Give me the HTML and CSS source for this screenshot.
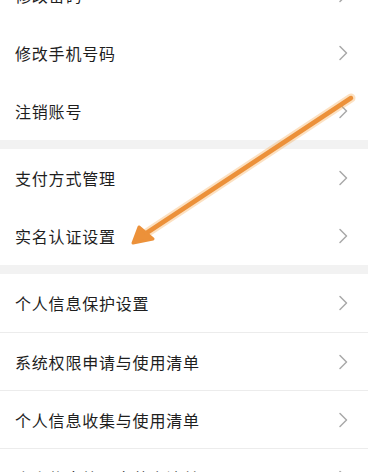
FILE: index.html
```html
<!DOCTYPE html>
<html lang="zh-CN">
<head>
  <meta charset="UTF-8">
  <meta name="viewport" content="width=device-width, initial-scale=1.0">
  <link rel="stylesheet" href="styles.css">
</head>
<body>
  <div class="page">

    <div class="group group-first">
      <div class="row"><span class="row-text">修改密码</span><svg class="chevron" viewBox="0 0 10 16"><path d="M2 1.5 L8.5 8 L2 14.5"/></svg></div>
      <div class="row"><span class="row-text">修改手机号码</span><svg class="chevron" viewBox="0 0 10 16"><path d="M2 1.5 L8.5 8 L2 14.5"/></svg></div>
      <div class="row"><span class="row-text">注销账号</span><svg class="chevron" viewBox="0 0 10 16"><path d="M2 1.5 L8.5 8 L2 14.5"/></svg></div>
    </div>

    <div class="group">
      <div class="row"><span class="row-text">支付方式管理</span><svg class="chevron" viewBox="0 0 10 16"><path d="M2 1.5 L8.5 8 L2 14.5"/></svg></div>
      <div class="row"><span class="row-text">实名认证设置</span><svg class="chevron" viewBox="0 0 10 16"><path d="M2 1.5 L8.5 8 L2 14.5"/></svg></div>
    </div>

    <div class="group group-lined">
      <div class="row"><span class="row-text">个人信息保护设置</span><svg class="chevron" viewBox="0 0 10 16"><path d="M2 1.5 L8.5 8 L2 14.5"/></svg></div>
      <div class="row"><span class="row-text">系统权限申请与使用清单</span><svg class="chevron" viewBox="0 0 10 16"><path d="M2 1.5 L8.5 8 L2 14.5"/></svg></div>
      <div class="row"><span class="row-text">个人信息收集与使用清单</span><svg class="chevron" viewBox="0 0 10 16"><path d="M2 1.5 L8.5 8 L2 14.5"/></svg></div>
      <div class="row"><span class="row-text">个人信息第三方共享清单</span><svg class="chevron" viewBox="0 0 10 16"><path d="M2 1.5 L8.5 8 L2 14.5"/></svg></div>
    </div>

    <!-- 手描きの矢印 -->
    <svg class="pointer-arrow" viewBox="0 0 368 472">
      <g class="arrow-glow">
        <path d="M351 98 L142 236"/>
      </g>
      <path class="arrow-line" d="M351 98 L142 236"/>
      <path class="arrow-head" d="M133 243 L139 227 L153 239 Z"/>
    </svg>

  </div>
</body>
</html>
```

FILE: styles.css
```css
body {
  margin: 0;
  background-color: #f2f2f2;
  font-family: "Noto Sans CJK SC", "Noto Sans", sans-serif;
  overflow: hidden;
}

.page {
  position: relative;
  width: 368px;
  height: 472px;
  overflow: hidden;
}

.group {
  background-color: #ffffff;
  margin-bottom: 9px;
}

.group-first {
  margin-top: -34px;
}

.row {
  height: 58px;
  display: flex;
  align-items: center;
  justify-content: space-between;
  padding: 0 20px 0 15px;
  box-sizing: border-box;
}

.group-lined .row + .row {
  border-top: 1px solid #ececec;
}

.row-text {
  font-size: 16px;
  letter-spacing: 0.8px;
  color: #1e1e1e;
}

.chevron {
  width: 10px;
  height: 16px;
  fill: none;
  stroke: #a9a9a9;
  stroke-width: 1.5;
  stroke-linecap: round;
  stroke-linejoin: round;
}

.pointer-arrow {
  position: absolute;
  top: 0;
  left: 0;
  width: 368px;
  height: 472px;
  pointer-events: none;
}

.arrow-glow path {
  stroke: rgba(245, 170, 80, 0.35);
  stroke-width: 9;
  stroke-linecap: round;
  fill: none;
}

.arrow-line {
  stroke: #ec913a;
  stroke-width: 4.5;
  stroke-linecap: round;
  fill: none;
}

.arrow-head {
  fill: #ec913a;
  stroke: #ec913a;
  stroke-width: 3;
  stroke-linejoin: round;
}
```
